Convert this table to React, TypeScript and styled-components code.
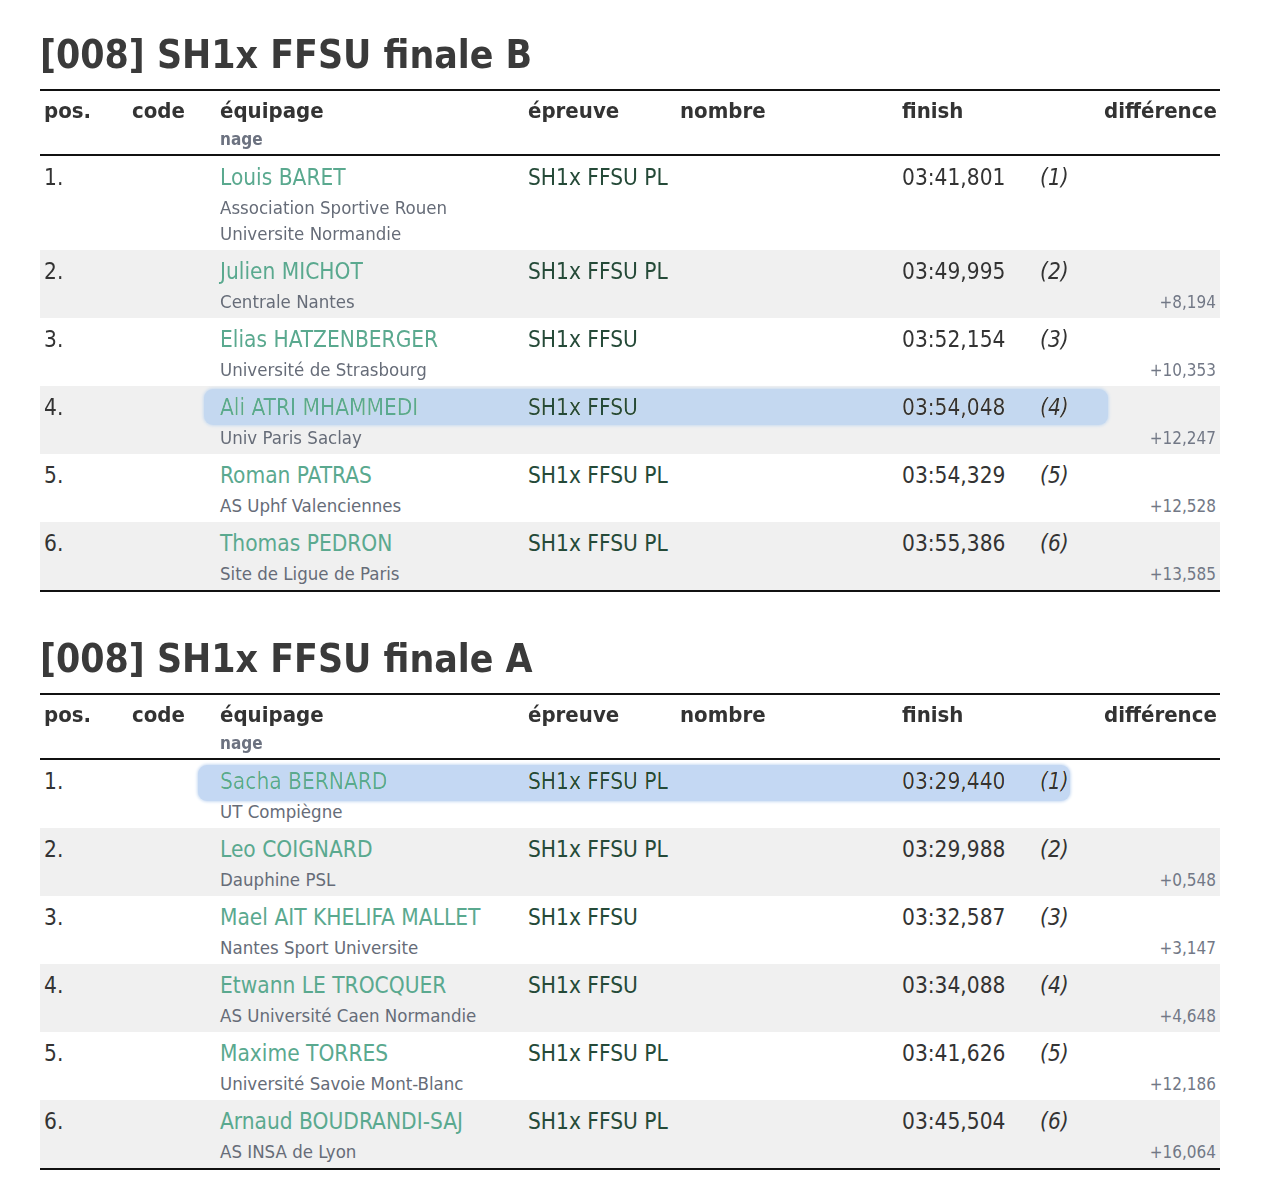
import styled, { createGlobalStyle } from "styled-components";

const GlobalStyle = createGlobalStyle`
  body {
    margin: 0;
    background: #ffffff;
    font-family: "DejaVu Sans Condensed", "DejaVu Sans", sans-serif;
    color: #333333;
  }
`;

type Result = {
  pos: string;
  name: string;
  club: string[];
  event: string;
  finish: string;
  rank: string;
  diff?: string;
  mark?: { left: number; width: number; top: number };
};

type Race = { title: string; results: Result[] };

const races: Race[] = [
  {
    title: "[008] SH1x FFSU finale B",
    results: [
      { pos: "1.", name: "Louis BARET", club: ["Association Sportive Rouen", "Universite Normandie"], event: "SH1x FFSU PL", finish: "03:41,801", rank: "(1)" },
      { pos: "2.", name: "Julien MICHOT", club: ["Centrale Nantes"], event: "SH1x FFSU PL", finish: "03:49,995", rank: "(2)", diff: "+8,194" },
      { pos: "3.", name: "Elias HATZENBERGER", club: ["Université de Strasbourg"], event: "SH1x FFSU", finish: "03:52,154", rank: "(3)", diff: "+10,353" },
      { pos: "4.", name: "Ali ATRI MHAMMEDI", club: ["Univ Paris Saclay"], event: "SH1x FFSU", finish: "03:54,048", rank: "(4)", diff: "+12,247", mark: { left: 164, width: 904, top: 3 } },
      { pos: "5.", name: "Roman PATRAS", club: ["AS Uphf Valenciennes"], event: "SH1x FFSU PL", finish: "03:54,329", rank: "(5)", diff: "+12,528" },
      { pos: "6.", name: "Thomas PEDRON", club: ["Site de Ligue de Paris"], event: "SH1x FFSU PL", finish: "03:55,386", rank: "(6)", diff: "+13,585" },
    ],
  },
  {
    title: "[008] SH1x FFSU finale A",
    results: [
      { pos: "1.", name: "Sacha BERNARD", club: ["UT Compiègne"], event: "SH1x FFSU PL", finish: "03:29,440", rank: "(1)", mark: { left: 158, width: 872, top: 5 } },
      { pos: "2.", name: "Leo COIGNARD", club: ["Dauphine PSL"], event: "SH1x FFSU PL", finish: "03:29,988", rank: "(2)", diff: "+0,548" },
      { pos: "3.", name: "Mael AIT KHELIFA MALLET", club: ["Nantes Sport Universite"], event: "SH1x FFSU", finish: "03:32,587", rank: "(3)", diff: "+3,147" },
      { pos: "4.", name: "Etwann LE TROCQUER", club: ["AS Université Caen Normandie"], event: "SH1x FFSU", finish: "03:34,088", rank: "(4)", diff: "+4,648" },
      { pos: "5.", name: "Maxime TORRES", club: ["Université Savoie Mont-Blanc"], event: "SH1x FFSU PL", finish: "03:41,626", rank: "(5)", diff: "+12,186" },
      { pos: "6.", name: "Arnaud BOUDRANDI-SAJ", club: ["AS INSA de Lyon"], event: "SH1x FFSU PL", finish: "03:45,504", rank: "(6)", diff: "+16,064" },
    ],
  },
];

const Page = styled.div`
  width: 1180px;
  padding: 32px 0 0 40px;
`;

const Section = styled.section`
  & + & {
    margin-top: 44px;
  }
`;

const Title = styled.h1`
  margin: 0 0 11px;
  font-size: 38.8px;
  line-height: 46px;
  font-weight: bold;
  color: #3a3a3a;
`;

const Table = styled.div`
  border-top: 2px solid #111111;
  border-bottom: 2px solid #111111;
`;

const columns = "88px 88px 308px 152px 222px 138px 64px 1fr";

const HeadRow = styled.div`
  display: grid;
  grid-template-columns: ${columns};
  padding: 5px 0 4px;
  border-bottom: 2px solid #111111;
`;

const HeadCell = styled.div<{ $right?: boolean }>`
  padding: 0 4px;
  font-size: 22px;
  line-height: 30px;
  font-weight: bold;
  color: #333333;
  text-align: ${(p) => (p.$right ? "right" : "left")};
`;

const HeadSub = styled.div`
  margin-top: 2px;
  font-size: 17px;
  line-height: 22px;
  color: #6c7280;
`;

const Row = styled.div<{ $shaded: boolean }>`
  position: relative;
  display: grid;
  grid-template-columns: ${columns};
  grid-template-rows: 30px auto;
  padding: 6px 0 3px;
  background: ${(p) => (p.$shaded ? "#f0f0f0" : "#ffffff")};
`;

const Cell = styled.div<{ $color?: string; $italic?: boolean }>`
  grid-row: 1;
  padding: 0 4px;
  font-size: 22.5px;
  line-height: 30px;
  color: ${(p) => p.$color ?? "#333333"};
  font-style: ${(p) => (p.$italic ? "italic" : "normal")};
  white-space: nowrap;
`;

const Club = styled.div`
  grid-row: 2;
  grid-column: 3 / span 3;
  padding: 3px 4px 0;
  font-size: 18.5px;
  line-height: 26px;
  color: #666c78;
`;

const Diff = styled.div`
  grid-row: 2;
  grid-column: 7 / span 2;
  align-self: end;
  padding: 0 4px;
  font-size: 17px;
  line-height: 26px;
  text-align: right;
  color: #727886;
`;

const Mark = styled.div<{ $left: number; $width: number; $top: number }>`
  position: absolute;
  left: ${(p) => p.$left}px;
  top: ${(p) => p.$top}px;
  width: ${(p) => p.$width}px;
  height: 36px;
  border-radius: 9px;
  background: #c4d8f3;
  box-shadow: 0 0 3px 1px #cadcf3;
  mix-blend-mode: darken;
  pointer-events: none;
`;

function ResultTable({ race }: { race: Race }) {
  return (
    <Section>
      <Title>{race.title}</Title>
      <Table>
        <HeadRow>
          <HeadCell>pos.</HeadCell>
          <HeadCell>code</HeadCell>
          <HeadCell>
            équipage
            <HeadSub>nage</HeadSub>
          </HeadCell>
          <HeadCell>épreuve</HeadCell>
          <HeadCell>nombre</HeadCell>
          <HeadCell>finish</HeadCell>
          <HeadCell />
          <HeadCell $right>différence</HeadCell>
        </HeadRow>
        {race.results.map((r, i) => (
          <Row key={r.pos} $shaded={i % 2 === 1}>
            <Cell>{r.pos}</Cell>
            <Cell />
            <Cell $color="#5aa98f">{r.name}</Cell>
            <Cell $color="#254a38">{r.event}</Cell>
            <Cell />
            <Cell>{r.finish}</Cell>
            <Cell $italic>{r.rank}</Cell>
            <Club>
              {r.club.map((line) => (
                <div key={line}>{line}</div>
              ))}
            </Club>
            {r.diff && <Diff>{r.diff}</Diff>}
            {r.mark && (
              <Mark $left={r.mark.left} $width={r.mark.width} $top={r.mark.top} />
            )}
          </Row>
        ))}
      </Table>
    </Section>
  );
}

export default function App() {
  return (
    <>
      <GlobalStyle />
      <Page>
        {races.map((race) => (
          <ResultTable key={race.title} race={race} />
        ))}
      </Page>
    </>
  );
}
